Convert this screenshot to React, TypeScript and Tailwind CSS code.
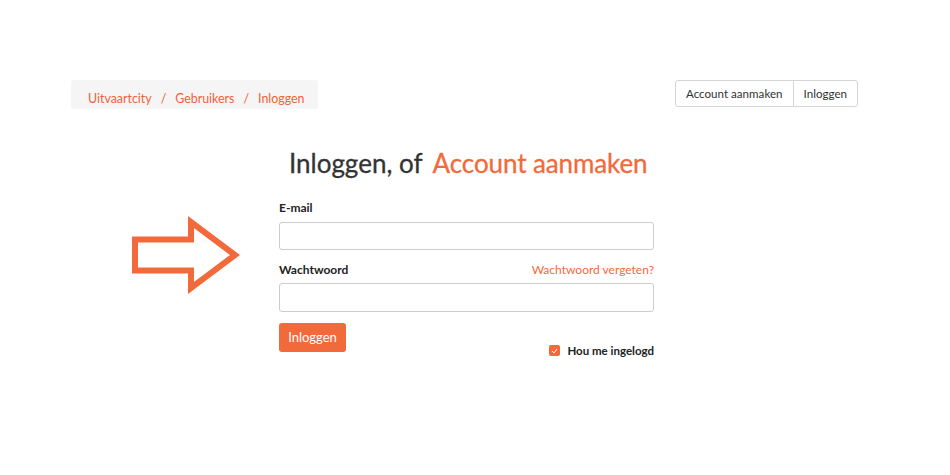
export default function App() {
  return (
    <div className="min-h-[475px] w-full bg-white text-[#333] font-['Lato',sans-serif]">
      <div className="pl-[71px] pr-[92px] pt-[80px]">
        <div className="flex items-start justify-between">
          <nav className="h-[29px] w-[247px] rounded-[3px] bg-[#f5f5f5] flex items-center pl-[17px] pt-[9px] text-[12.4px] text-[#f2603a]">
            <span>Uitvaartcity</span>
            <span className="mx-[9px]">/</span>
            <span>Gebruikers</span>
            <span className="mx-[9px]">/</span>
            <span>Inloggen</span>
          </nav>
          <div className="flex h-[27px] rounded-[3px] border border-[#d5d5d5] text-[11.6px] text-[#333]">
            <span className="flex items-center px-[10px] border-r border-[#d5d5d5]">Account aanmaken</span>
            <span className="flex items-center px-[10px]">Inloggen</span>
          </div>
        </div>

        <div className="relative mx-auto mt-[36px] w-[375px] ml-[208px]">
          <svg className="absolute left-[-148px] top-[70px]" width="110" height="80" viewBox="131 215 110 80">
            <polygon
              points="135,239.5 191,239.5 191,222 235,255 191,288 191,270.5 135,270.5"
              fill="none"
              stroke="#f26a3b"
              strokeWidth="6"
              strokeLinejoin="miter"
            />
          </svg>
          <h1 className="pl-[10px] text-[26px] leading-[36px] flex gap-[10px] [-webkit-text-stroke:0.3px]">
            <span className="text-[#333]">Inloggen, of</span>
            <span className="text-[#f26a3b] tracking-[-0.1px]">Account aanmaken</span>
          </h1>
          <form className="mt-[19px]">
            <label className="block text-[12px] font-bold leading-[16px] text-[#222]">E-mail</label>
            <input className="mt-[6px] block h-[28px] w-full rounded-[3px] border border-[#ccc] bg-white" />
            <div className="mt-[12px] flex items-center justify-between text-[12px] leading-[16px]">
              <label className="font-bold text-[#222]">Wachtwoord</label>
              <span className="text-[#f26a3b]">Wachtwoord vergeten?</span>
            </div>
            <input type="password" className="mt-[5px] block h-[29px] w-full rounded-[3px] border border-[#ccc] bg-white" />
            <div className="mt-[11px] flex items-start justify-between">
              <button type="button" className="h-[29px] w-[67px] rounded-[3px] bg-[#f26a3b] text-[13px] text-white">
                Inloggen
              </button>
              <label className="mt-[19px] flex items-center gap-[7px] text-[11.5px] font-bold text-[#222]">
                <span className="flex h-[11px] w-[11px] items-center justify-center rounded-[2px] bg-[#f26a3b]">
                  <svg width="7" height="6" viewBox="0 0 7 6">
                    <path d="M1 3 L3 5 L6 1" fill="none" stroke="white" strokeWidth="1" />
                  </svg>
                </span>
                Hou me ingelogd
              </label>
            </div>
          </form>
        </div>
      </div>
    </div>
  );
}
